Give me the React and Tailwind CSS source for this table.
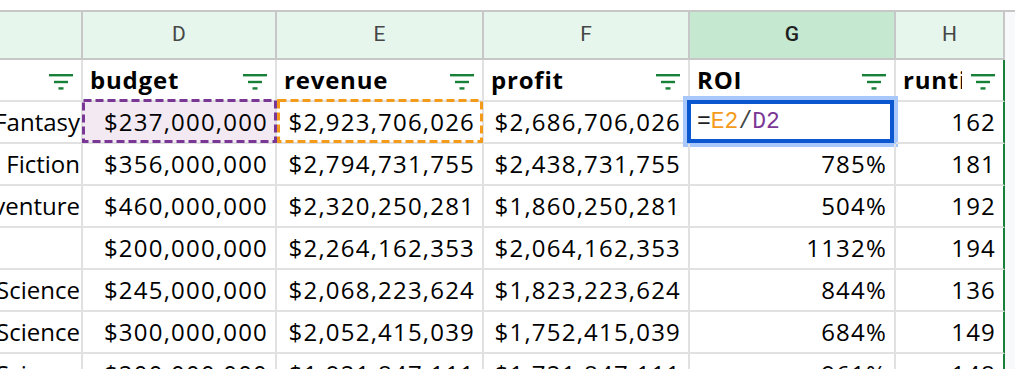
import React from 'react';

const COLS = 'grid grid-cols-[83px_194px_207px_206px_206px_109px_1fr]';

const rows = [
  { genre: 'Fantasy', budget: '$237,000,000', revenue: '$2,923,706,026', profit: '$2,686,706,026', roi: null, runtime: '162' },
  { genre: 'Fiction', budget: '$356,000,000', revenue: '$2,794,731,755', profit: '$2,438,731,755', roi: '785%', runtime: '181' },
  { genre: 'venture', budget: '$460,000,000', revenue: '$2,320,250,281', profit: '$1,860,250,281', roi: '504%', runtime: '192' },
  { genre: '', budget: '$200,000,000', revenue: '$2,264,162,353', profit: '$2,064,162,353', roi: '1132%', runtime: '194' },
  { genre: 'Science', budget: '$245,000,000', revenue: '$2,068,223,624', profit: '$1,823,223,624', roi: '844%', runtime: '136' },
  { genre: 'Science', budget: '$300,000,000', revenue: '$2,052,415,039', profit: '$1,752,415,039', roi: '684%', runtime: '149' },
  { genre: 'Science', budget: '$200,000,000', revenue: '$1,921,847,111', profit: '$1,721,847,111', roi: '961%', runtime: '148' },
];

function FilterIcon() {
  return (
    <svg width="24" height="16" viewBox="0 0 24 16" className="mt-[3px] shrink-0">
      <rect x="0" y="0" width="24" height="2.4" fill="#188038" />
      <rect x="5" y="6.8" width="14" height="2.4" fill="#188038" />
      <rect x="9.5" y="13.2" width="5" height="2.4" fill="#188038" />
    </svg>
  );
}

// marching-ants box drawn over a referenced cell
function DashBox({ color, className }) {
  return (
    <svg className={`pointer-events-none absolute ${className}`} preserveAspectRatio="none">
      <rect x="1.5" y="1.5" width="calc(100% - 3px)" height="calc(100% - 3px)" fill="none" stroke={color} strokeWidth="3" strokeDasharray="8 4" />
    </svg>
  );
}

function Letter({ children, active }) {
  return (
    <div
      className={`flex h-[48px] items-center justify-center border-r-2 border-b-2 border-[#c7c7c7] font-['Roboto',sans-serif] text-[21px] tracking-normal ${
        active ? 'bg-[#c4e8d0] font-medium text-[#1f1f1f]' : 'bg-[#e7f6ec] text-[#444746]'
      }`}
    >
      {children}
    </div>
  );
}

function Head({ label, last }) {
  return (
    <div
      className={`flex h-[42px] items-center gap-[9px] border-r-2 border-b-2 border-[#e1e1e1] pl-[7px] pr-[8px] ${
        last ? 'border-r-[#188038]' : ''
      }`}
    >
      <div className="min-w-0 flex-1 overflow-hidden whitespace-nowrap font-bold tracking-[0.8px]">{label}</div>
      <FilterIcon />
    </div>
  );
}

function Num({ children, className = '', last }) {
  return (
    <div
      className={`relative flex h-[42px] items-center justify-end whitespace-nowrap border-r-2 border-b-2 border-[#e1e1e1] px-[7px] ${
        last ? 'border-r-[#188038]' : ''
      } ${className}`}
    >
      {children}
    </div>
  );
}

export default function App() {
  return (
    <div className="h-[369px] w-[1015px] overflow-hidden bg-white font-['Open_Sans',sans-serif] text-[24px] tracking-[1.2px] text-black">
      <div className="h-[10px]" />
      <div className="h-[2px] bg-[#c7c7c7]" />

      <div className={COLS}>
        <Letter />
        <Letter>D</Letter>
        <Letter>E</Letter>
        <Letter>F</Letter>
        <Letter active>G</Letter>
        <Letter>H</Letter>
        <div className="h-[48px] bg-[#f8f9fa]" />
      </div>

      <div className={COLS}>
        <Head label="" />
        <Head label="budget" />
        <Head label="revenue" />
        <Head label="profit" />
        <Head label="ROI" />
        <Head label="runtime" last />
        <div className="bg-[#f8f9fa]" />

        {rows.map((r, i) => (
          <React.Fragment key={i}>
            <div className="flex h-[42px] items-center justify-end overflow-hidden whitespace-nowrap border-r-2 border-b-2 border-[#e1e1e1] pr-[1px] tracking-normal">
              {r.genre}
            </div>
            <Num className={i === 0 ? 'bg-[#f3e9f3]' : ''}>
              {r.budget}
              {i === 0 && <DashBox color="#7b3796" className="-left-[1px] -top-[3px] h-[44px] w-[195px]" />}
            </Num>
            <Num>
              {r.revenue}
              {i === 0 && <DashBox color="#f49b1c" className="left-0 -top-[3px] h-[44px] w-[206px]" />}
            </Num>
            <Num>{r.profit}</Num>
            {r.roi ? (
              <Num>{r.roi}</Num>
            ) : (
              <div className="relative flex h-[42px] items-center border-r-2 border-b-2 border-[#e1e1e1] pl-[7px] font-['Liberation_Mono',monospace] text-[23px] tracking-normal">
                <span className="text-[#1f1f1f]">=</span>
                <span className="text-[#f49b1c]">E2</span>
                <span className="text-[#444746]">/</span>
                <span className="text-[#7b3796]">D2</span>
                <div className="pointer-events-none absolute -left-[3px] -top-[2px] h-[43px] w-[207px] border-4 border-[#0b57d0] shadow-[0_0_0_4px_#a8c7fa]" />
              </div>
            )}
            <Num last>{r.runtime}</Num>
            <div className="bg-[#f8f9fa]" />
          </React.Fragment>
        ))}
      </div>
    </div>
  );
}
